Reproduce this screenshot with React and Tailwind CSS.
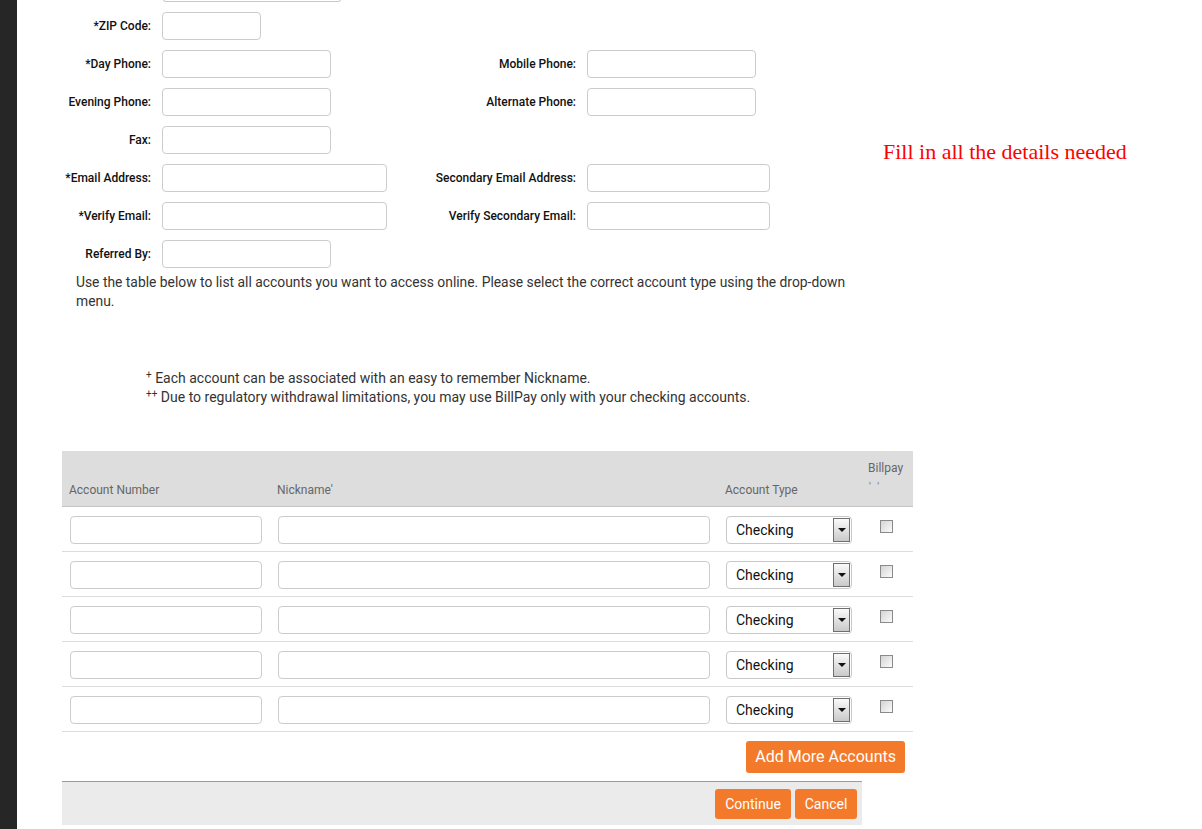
import React from 'react';

const font = { fontFamily: 'Roboto, "Liberation Sans", Arial, sans-serif' };

const TextBox = ({ w }) => (
  <input
    type="text"
    className={`${w} h-[28px] rounded-[4px] border border-[#cccccc] bg-white outline-none`}
  />
);

const SelectBox = ({ w, value }) => (
  <div className={`${w} h-[28px] rounded-[4px] border border-[#c8c8c8] bg-white flex items-stretch`}>
    <span className="flex-1 flex items-center pl-[9px] text-[14px] text-[#111]">{value}</span>
    <span className="w-[17px] my-[1px] mr-[1px] border border-[#6f6f6f] bg-gradient-to-b from-[#fafafa] to-[#c9c9c9] flex items-center justify-center">
      <span className="block w-0 h-0 border-l-[4px] border-r-[4px] border-t-[4px] border-l-transparent border-r-transparent border-t-[#111]" />
    </span>
  </div>
);

const Label = ({ children, w }) => (
  <span className={`${w} text-right text-[12px] font-medium text-[#111] pr-[11px] shrink-0`}>{children}</span>
);

// one row of the contact form: left field + optional right field
const FormRow = ({ left, leftW, right, rightW }) => (
  <div className="flex items-center h-[28px]">
    <div className="w-[385px] flex items-center shrink-0">
      <Label w="w-[145px]">{left}</Label>
      <TextBox w={leftW} />
    </div>
    {right && (
      <div className="flex items-center">
        <Label w="w-[185px]">{right}</Label>
        <TextBox w={rightW} />
      </div>
    )}
  </div>
);

const CheckBox = () => (
  <span className="block w-[13px] h-[13px] border border-[#8a8a8a] bg-gradient-to-br from-[#d4d4d4] to-[#fbfbfb]" />
);

const AccountRow = () => (
  <div className="grid grid-cols-[208px_448px_143px_52px] h-[45px] border-b border-[#dddddd]">
    <div className="pl-[8px] pt-[9px]"><TextBox w="w-[192px]" /></div>
    <div className="pl-[8px] pt-[9px]"><TextBox w="w-[432px]" /></div>
    <div className="pl-[8px] pt-[9px]"><SelectBox w="w-[126px]" value="Checking" /></div>
    <div className="pl-[19px] pt-[13px]"><CheckBox /></div>
  </div>
);

export default function App() {
  return (
    <div className="flex min-h-screen bg-white overflow-hidden" style={font}>
      <div className="w-[17px] shrink-0 bg-[#262626]" />
      <div className="relative flex-1">
        <div className="flex flex-col gap-[10px] -mt-[26px]">
          <div className="flex items-center h-[28px]">
            <Label w="w-[145px]">{'\u00a0'}</Label>
            <SelectBox w="w-[180px]" value="" />
          </div>
          <FormRow left="*ZIP Code:" leftW="w-[99px]" />
          <FormRow left="*Day Phone:" leftW="w-[169px]" right="Mobile Phone:" rightW="w-[169px]" />
          <FormRow left="Evening Phone:" leftW="w-[169px]" right="Alternate Phone:" rightW="w-[169px]" />
          <FormRow left="Fax:" leftW="w-[169px]" />
          <FormRow left="*Email Address:" leftW="w-[225px]" right="Secondary Email Address:" rightW="w-[183px]" />
          <FormRow left="*Verify Email:" leftW="w-[225px]" right="Verify Secondary Email:" rightW="w-[183px]" />
          <FormRow left="Referred By:" leftW="w-[169px]" />
        </div>

        <p className="mt-[5px] ml-[59px] w-[790px] text-[13.85px] leading-[19px] text-[#333]">
          Use the table below to list all accounts you want to access online. Please select the correct account type using the drop-down menu.
        </p>

        <div className="mt-[58px] ml-[129px] text-[14px] leading-[19px] text-[#333]">
          <p><sup className="text-[10px]">+</sup> Each account can be associated with an easy to remember Nickname.</p>
          <p><sup className="text-[10px]">++</sup> Due to regulatory withdrawal limitations, you may use BillPay only with your checking accounts.</p>
        </div>

        <div className="mt-[44px] ml-[45px] w-[851px]">
          <div className="grid grid-cols-[208px_448px_143px_52px] h-[56px] bg-[#dddddd] border-b border-[#c4c4c4] text-[12px] text-[#666]">
            <div className="pl-[7px] flex items-end pb-[7px]">Account Number</div>
            <div className="pl-[7px] flex items-end pb-[7px]">Nickname'</div>
            <div className="pl-[7px] flex items-end pb-[7px]">Account Type</div>
            <div className="pl-[7px] pt-[8px] leading-[18px]">
              <div>Billpay</div>
              <div className="text-[10px] leading-[14px] pl-[1px] pt-[3px] tracking-[2px]">' '</div>
            </div>
          </div>
          <AccountRow />
          <AccountRow />
          <AccountRow />
          <AccountRow />
          <AccountRow />
          <div className="flex justify-end pr-[8px] pt-[9px]">
            <button className="h-[32px] px-[9px] rounded-[3px] bg-[#f47a2b] text-white text-[16px]">Add More Accounts</button>
          </div>
          <div className="mt-[8px] w-[800px] h-[44px] bg-[#ebebeb] border-t border-[#9c9c9c] flex justify-end items-start gap-[4px] pr-[5px] pt-[7px]">
            <button className="h-[30px] w-[76px] rounded-[3px] bg-[#f47a2b] text-white text-[14px]">Continue</button>
            <button className="h-[30px] w-[62px] rounded-[3px] bg-[#f47a2b] text-white text-[14px]">Cancel</button>
          </div>
        </div>

        <div
          className="absolute left-[866px] top-[139px] text-[22px] leading-[26px] text-[#ff0000] whitespace-nowrap"
          style={{ fontFamily: '"Liberation Serif", "Times New Roman", serif' }}
        >
          Fill in all the details needed
        </div>
      </div>
    </div>
  );
}
